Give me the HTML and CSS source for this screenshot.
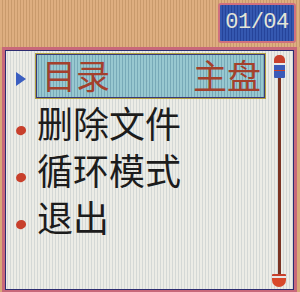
FILE: index.html
```html
<!DOCTYPE html>
<html lang="zh-CN">
<head>
    <meta charset="UTF-8">
    <meta name="viewport" content="width=device-width, initial-scale=1.0">
    <title>菜单</title>
    <link rel="stylesheet" href="styles.css">
</head>
<body>
    <div class="screen">
        <!-- Barra superior com contador -->
        <div class="top">
            <div class="badge">01/04</div>
        </div>

        <!-- Painel do menu -->
        <div class="panel">
            <div class="list">
                <div class="row selected">
                    <span class="marker arrow"></span>
                    <div class="label"><span>目录</span><span>主盘</span></div>
                </div>
                <div class="row">
                    <span class="marker dot"></span>
                    <div class="label">删除文件</div>
                </div>
                <div class="row">
                    <span class="marker dot"></span>
                    <div class="label">循环模式</div>
                </div>
                <div class="row">
                    <span class="marker dot"></span>
                    <div class="label">退出</div>
                </div>
            </div>
            <div class="scroll">
                <div class="knob"></div>
                <div class="track"></div>
                <div class="end"></div>
            </div>
        </div>
    </div>
</body>
</html>
```

FILE: styles.css
```css
body {
    margin: 0;
    padding: 0;
    background: #d8a878;
    font-family: "Noto Sans CJK SC", "DejaVu Sans", sans-serif;
}
.screen {
    width: 300px;
    height: 292px;
    overflow: hidden;
    display: flex;
    flex-direction: column;
}
.top {
    height: 47px;
    display: flex;
    justify-content: flex-end;
    align-items: flex-start;
    padding: 3px 4px 0 0;
    box-sizing: border-box;
    background: repeating-linear-gradient(90deg, #deae80 0 2px, #c99a6c 2px 3px);
}
.badge {
    width: 78px;
    height: 40px;
    box-sizing: border-box;
    border: 2px solid #d0707e;
    border-radius: 3px;
    background: repeating-linear-gradient(90deg, #3558b0 0 2px, #26449a 2px 3px);
    color: #e4e6d8;
    font-family: "Liberation Mono", "DejaVu Sans Mono", monospace;
    font-size: 22px;
    line-height: 36px;
    text-align: center;
    letter-spacing: -0.5px;
}
.panel {
    flex: 1;
    margin: 0 3px 0 2px;
    border: 3px solid #c8687a;
    border-bottom-width: 2px;
    box-shadow: inset 0 0 0 1px #2c2c70;
    background: repeating-linear-gradient(90deg, #ecece6 0 2px, #d4d8d6 2px 3px);
    display: flex;
    padding: 2px 2px 0 1px;
}
.list {
    flex: 1;
    display: flex;
    flex-direction: column;
}
.row {
    height: 47px;
    display: flex;
    align-items: center;
}
.marker {
    width: 29px;
    flex: none;
    display: flex;
    justify-content: center;
}
.arrow::before {
    content: "";
    margin-top: 6px;
    border-left: 10px solid #3a5ec0;
    border-top: 7px solid transparent;
    border-bottom: 7px solid transparent;
}
.dot::before {
    content: "";
    width: 10px;
    height: 9px;
    margin-top: 16px;
    background: #c8402c;
    border-radius: 50% 50% 45% 45%;
    transform: rotate(-20deg);
}
.label {
    flex: 1;
    font-size: 36px;
    line-height: 47px;
    color: #1c1c1c;
    white-space: nowrap;
    padding-left: 2px;
}
.selected .label {
    height: 46px;
    box-sizing: border-box;
    border: 1px solid #b0a040;
    box-shadow: inset 0 0 0 1px #3a3a78;
    background: repeating-linear-gradient(90deg, #98c8d0 0 2px, #78aab8 2px 3px);
    color: #a4402c;
    font-size: 34px;
    line-height: 42px;
    display: flex;
    justify-content: space-between;
    padding: 0 4px 0 6px;
    margin-right: 2px;
}
.scroll {
    width: 22px;
    flex: none;
    display: flex;
    flex-direction: column;
    align-items: center;
    padding: 3px 2px 3px 0;
}
.knob {
    width: 11px;
    height: 23px;
    background:
        linear-gradient(#c8402c 0 8px, #e8e8e8 8px 10px, #3a5ab8 10px 15px, #c8402c 15px 16px, #3a5ab8 16px 23px);
    border-radius: 5px 5px 1px 1px;
}
.track {
    flex: 1;
    width: 3px;
    background: #7a3424;
}
.end {
    width: 14px;
    height: 13px;
    background: linear-gradient(#c8402c 0 2px, #e8e8e8 2px 4px, #d8482a 4px);
    border-radius: 1px 1px 7px 7px;
}
```
